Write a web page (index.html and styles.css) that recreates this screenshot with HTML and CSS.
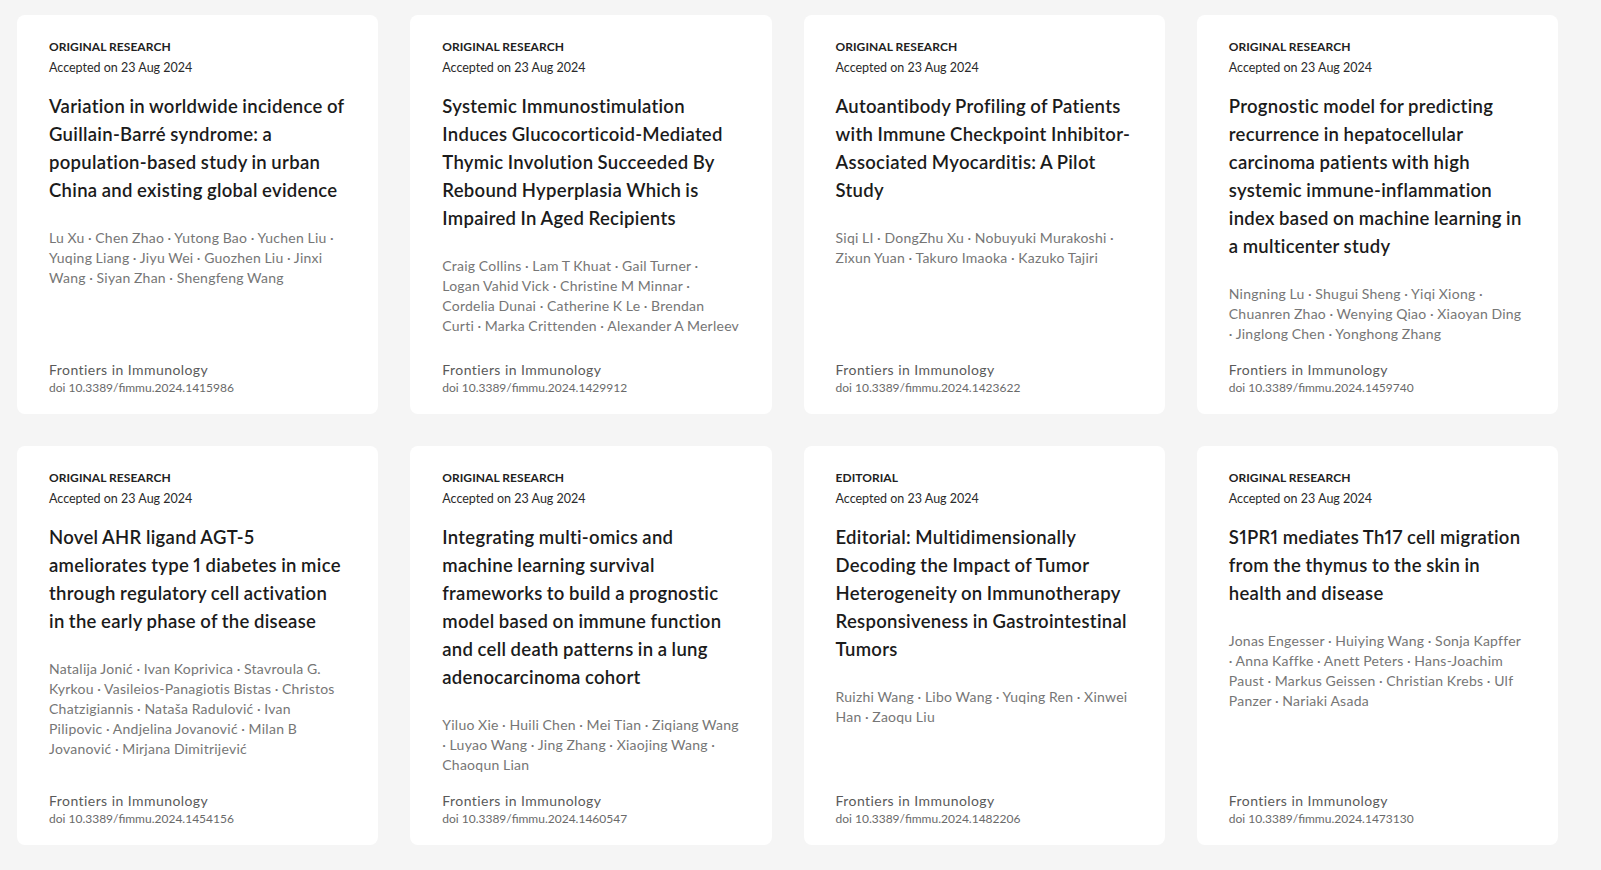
FILE: index.html
```html
<!DOCTYPE html>
<html lang="en">
<head>
<meta charset="utf-8">
<title>Frontiers in Immunology – articles</title>
<link rel="stylesheet" href="styles.css">
</head>
<body>
<main class="grid">
  <article class="card">
    <div class="type">ORIGINAL RESEARCH</div>
    <div class="date">Accepted on 23 Aug 2024</div>
    <h2 class="title">Variation in worldwide incidence of Guillain-Barré syndrome: a population-based study in urban China and existing global evidence</h2>
    <p class="authors">Lu Xu · Chen Zhao · Yutong Bao · Yuchen Liu · Yuqing Liang · Jiyu Wei · Guozhen Liu · Jinxi Wang · Siyan Zhan · Shengfeng Wang</p>
    <div class="foot">
      <div class="journal">Frontiers in Immunology</div>
      <div class="doi">doi 10.3389/fimmu.2024.1415986</div>
    </div>
  </article>
  <article class="card">
    <div class="type">ORIGINAL RESEARCH</div>
    <div class="date">Accepted on 23 Aug 2024</div>
    <h2 class="title">Systemic Immunostimulation Induces Glucocorticoid-Mediated Thymic Involution Succeeded By Rebound Hyperplasia Which is Impaired In Aged Recipients</h2>
    <p class="authors">Craig Collins · Lam T Khuat · Gail Turner · Logan Vahid Vick · Christine M Minnar · Cordelia Dunai · Catherine K Le · Brendan Curti · Marka Crittenden · Alexander A Merleev</p>
    <div class="foot">
      <div class="journal">Frontiers in Immunology</div>
      <div class="doi">doi 10.3389/fimmu.2024.1429912</div>
    </div>
  </article>
  <article class="card">
    <div class="type">ORIGINAL RESEARCH</div>
    <div class="date">Accepted on 23 Aug 2024</div>
    <h2 class="title">Autoantibody Profiling of Patients with Immune Checkpoint Inhibitor-Associated Myocarditis: A Pilot Study</h2>
    <p class="authors">Siqi LI · DongZhu Xu · Nobuyuki Murakoshi · Zixun Yuan · Takuro Imaoka · Kazuko Tajiri</p>
    <div class="foot">
      <div class="journal">Frontiers in Immunology</div>
      <div class="doi">doi 10.3389/fimmu.2024.1423622</div>
    </div>
  </article>
  <article class="card">
    <div class="type">ORIGINAL RESEARCH</div>
    <div class="date">Accepted on 23 Aug 2024</div>
    <h2 class="title">Prognostic model for predicting recurrence in hepatocellular carcinoma patients with high systemic immune-inflammation index based on machine learning in a multicenter study</h2>
    <p class="authors">Ningning Lu · Shugui Sheng · Yiqi Xiong · Chuanren Zhao · Wenying Qiao · Xiaoyan Ding · Jinglong Chen · Yonghong Zhang</p>
    <div class="foot">
      <div class="journal">Frontiers in Immunology</div>
      <div class="doi">doi 10.3389/fimmu.2024.1459740</div>
    </div>
  </article>
  <article class="card">
    <div class="type">ORIGINAL RESEARCH</div>
    <div class="date">Accepted on 23 Aug 2024</div>
    <h2 class="title">Novel AHR ligand AGT-5 ameliorates type 1 diabetes in mice through regulatory cell activation in the early phase of the disease</h2>
    <p class="authors">Natalija Jonić · Ivan Koprivica · Stavroula G. Kyrkou · Vasileios-Panagiotis Bistas · Christos Chatzigiannis · Nataša Radulović · Ivan Pilipovic · Andjelina Jovanović · Milan B Jovanović · Mirjana Dimitrijević</p>
    <div class="foot">
      <div class="journal">Frontiers in Immunology</div>
      <div class="doi">doi 10.3389/fimmu.2024.1454156</div>
    </div>
  </article>
  <article class="card">
    <div class="type">ORIGINAL RESEARCH</div>
    <div class="date">Accepted on 23 Aug 2024</div>
    <h2 class="title">Integrating multi-omics and machine learning survival frameworks to build a prognostic model based on immune function and cell death patterns in a lung adenocarcinoma cohort</h2>
    <p class="authors">Yiluo Xie · Huili Chen · Mei Tian · Ziqiang Wang · Luyao Wang · Jing Zhang · Xiaojing Wang · Chaoqun Lian</p>
    <div class="foot">
      <div class="journal">Frontiers in Immunology</div>
      <div class="doi">doi 10.3389/fimmu.2024.1460547</div>
    </div>
  </article>
  <article class="card">
    <div class="type">EDITORIAL</div>
    <div class="date">Accepted on 23 Aug 2024</div>
    <h2 class="title">Editorial: Multidimensionally Decoding the Impact of Tumor Heterogeneity on Immunotherapy Responsiveness in Gastrointestinal Tumors</h2>
    <p class="authors">Ruizhi Wang · Libo Wang · Yuqing Ren · Xinwei Han · Zaoqu Liu</p>
    <div class="foot">
      <div class="journal">Frontiers in Immunology</div>
      <div class="doi">doi 10.3389/fimmu.2024.1482206</div>
    </div>
  </article>
  <article class="card">
    <div class="type">ORIGINAL RESEARCH</div>
    <div class="date">Accepted on 23 Aug 2024</div>
    <h2 class="title">S1PR1 mediates Th17 cell migration from the thymus to the skin in health and disease</h2>
    <p class="authors">Jonas Engesser · Huiying Wang · Sonja Kapffer · Anna Kaffke · Anett Peters · Hans-Joachim Paust · Markus Geissen · Christian Krebs · Ulf Panzer · Nariaki Asada</p>
    <div class="foot">
      <div class="journal">Frontiers in Immunology</div>
      <div class="doi">doi 10.3389/fimmu.2024.1473130</div>
    </div>
  </article>
</main>
</body>
</html>
```

FILE: styles.css
```css
* { box-sizing: border-box; }

html, body {
  margin: 0;
  padding: 0;
  background: #f5f5f5;
}

body {
  font-family: "Lato", "Noto Sans", "Liberation Sans", sans-serif;
  color: #1b1b1b;
}

.grid {
  display: grid;
  grid-template-columns: repeat(4, 361.25px);
  grid-auto-rows: 399px;
  column-gap: 32px;
  row-gap: 32px;
  padding: 15px 0 0 17px;
}

.card {
  background: #ffffff;
  border-radius: 8px;
  padding: 24px 32px 18px;
  display: flex;
  flex-direction: column;
}

.type {
  font-size: 12px;
  line-height: 16px;
  font-weight: 700;
  letter-spacing: 0.05px;
  color: #222222;
}

.date {
  margin-top: 5px;
  font-size: 12.5px;
  line-height: 16px;
  color: #2a2a2a;
}

.title {
  margin: 16px 0 0;
  font-size: 18.5px;
  line-height: 28px;
  font-weight: 600;
  letter-spacing: 0.3px;
  word-spacing: -0.6px;
  font-variant-numeric: proportional-nums;
  color: #1b1b1b;
}

.authors {
  margin: 24px 0 0;
  font-size: 14px;
  line-height: 20px;
  letter-spacing: 0.25px;
  word-spacing: -0.4px;
  color: #767676;
}

.foot {
  margin-top: auto;
}

.journal {
  font-size: 14px;
  line-height: 20px;
  letter-spacing: 0.44px;
  color: #5a5a5a;
}

.doi {
  font-size: 12px;
  line-height: 16px;
  color: #6a6a6a;
}
```
